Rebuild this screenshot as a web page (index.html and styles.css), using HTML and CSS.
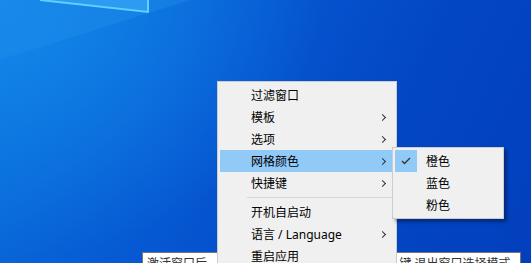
FILE: index.html
```html
<!DOCTYPE html>
<html>
<head>
	<meta charset="utf-8">
	<title>网格颜色</title>
	<link rel="stylesheet" href="styles.css">
</head>
<body>

<div class="desktop">
	<svg class="wallpaper" width="531" height="263" viewBox="0 0 531 263">
		<polygon points="0,0 190,0 0,60" fill="#1f8cec" opacity=".45"/>
		<polygon points="40,0 148,0 148,12" fill="#2e9bf2"/>
		<polyline points="40,0 148,12 148,0" fill="none" stroke="#5fd0ff" stroke-width="2"/>
	</svg>

	<div class="tip">
		<span>激活窗口后，单击鼠标左键选择目标窗口</span>
		<span>按 Esc 键 退出窗口选择模式</span>
	</div>

	<div class="menu">
		<div class="item">过滤窗口</div>
		<div class="item">模板<i class="arrow"></i></div>
		<div class="item">选项<i class="arrow"></i></div>
		<div class="item active">网格颜色<i class="arrow"></i></div>
		<div class="item">快捷键<i class="arrow"></i></div>
		<div class="sep"></div>
		<div class="item">开机自启动</div>
		<div class="item">语言 / Language<i class="arrow"></i></div>
		<div class="item">重启应用</div>
	</div>

	<div class="menu sub">
		<div class="item"><span class="check on"><svg width="10" height="8" viewBox="0 0 10 8"><polyline points="1,4 3.5,6.5 9,1" fill="none" stroke="#333" stroke-width="1.3"/></svg></span>橙色</div>
		<div class="item"><span class="check"></span>蓝色</div>
		<div class="item"><span class="check"></span>粉色</div>
	</div>
</div>

</body>
</html>
```
FILE: styles.css
```css
html, body {
	margin: 0;
	padding: 0;
	overflow: hidden;
}

body {
	font-family: "Noto Sans", "Noto Sans CJK SC", sans-serif;
	font-size: 12px;
	color: #000;
}

.desktop {
	position: relative;
	width: 531px;
	height: 263px;
	background:
		radial-gradient(ellipse 320px 260px at 0 0, rgba(20, 140, 235, .9), rgba(20, 140, 235, 0)),
		linear-gradient(115deg, #0a70dc 0%, #0658d2 40%, #0346c4 70%, #023fbd 100%);
}

.wallpaper {
	position: absolute;
	left: 0;
	top: 0;
}

/* tooltip behind the menu */
.tip {
	position: absolute;
	left: 142px;
	top: 252px;
	width: 361px;
	height: 30px;
	padding: 3px 12px 0 4px;
	background: #fff;
	border: 1px solid #767676;
	display: flex;
	justify-content: space-between;
	white-space: nowrap;
	line-height: 16px;
	color: #333;
}

/* context menu */
.menu {
	position: absolute;
	left: 217px;
	top: 81px;
	width: 174px;
	padding: 2px;
	background: #f0f0f0;
	border: 1px solid #cccccc;
}

.item {
	height: 22px;
	padding-left: 31px;
	display: flex;
	align-items: center;
	white-space: nowrap;
}

.item.active {
	background: #91c9f7;
}

.arrow {
	margin-left: auto;
	margin-right: 9px;
	width: 4px;
	height: 4px;
	border-right: 1px solid #333;
	border-top: 1px solid #333;
	transform: rotate(45deg);
}

.sep {
	height: 1px;
	margin: 3px 0 3px 27px;
	background: #d7d7d7;
}

.sub {
	left: 392px;
	top: 147px;
	width: 106px;
	box-shadow: 3px 3px 3px rgba(0, 0, 0, .35);
}

.sub .item {
	padding-left: 0;
}

.check {
	width: 22px;
	height: 22px;
	margin-right: 9px;
	display: flex;
	align-items: center;
	justify-content: center;
}

.check.on {
	background: #91c9f7;
}
```
